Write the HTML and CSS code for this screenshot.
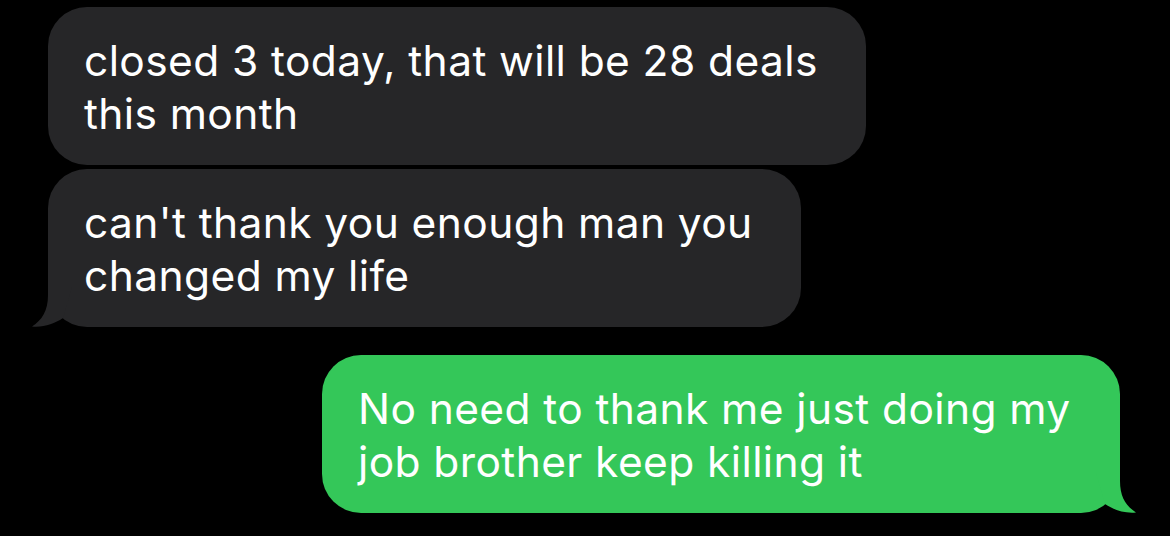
FILE: index.html
```html
<!DOCTYPE html>
<html>
<head>
<meta charset="utf-8">
<link rel="stylesheet" href="styles.css">
</head>
<body>
<div class="thread">
  <div class="msg in w1">closed 3 today, that will be 28 deals<br>this month</div>
  <div class="msg in w2">can't thank you enough man you<br>changed my life<svg class="tail tail-in" width="50" height="40" viewBox="0 0 50 40"><path d="M18,0 L18,8 C18,24 12,33 2,39.5 C14,40.5 24,37 33,31 L42,0 Z"/></svg></div>
  <div class="msg out w3">No need to thank me just doing my<br>job brother keep killing it<svg class="tail tail-out" width="50" height="40" viewBox="0 0 50 40"><path d="M18,0 L18,8 C18,24 12,33 2,39.5 C14,40.5 24,37 33,31 L42,0 Z"/></svg></div>
</div>
</body>
</html>
```
FILE: styles.css
```css
html, body {
  margin: 0;
  padding: 0;
  background: #000;
}
body {
  width: 1170px;
  height: 536px;
  overflow: hidden;
}
.thread {
  display: flex;
  flex-direction: column;
  align-items: flex-start;
  padding: 7px 50px 0 48px;
}
.msg {
  position: relative;
  box-sizing: border-box;
  height: 158px;
  padding: 27px 0 25px 36px;
  border-radius: 39px;
  font-family: Inter, "Liberation Sans", sans-serif;
  font-size: 42.5px;
  letter-spacing: 0.4px;
  line-height: 53px;
  color: #fff;
  white-space: nowrap;
}
.in {
  background: #262628;
}
.in .tail path { fill: #262628; }
.out {
  background: #34c759;
  align-self: flex-end;
}
.out .tail path { fill: #34c759; }
.w1 { width: 818px; }
.w2 { width: 753px; margin-top: 4px; }
.w3 { width: 798px; margin-top: 28px; }
.tail {
  position: absolute;
  bottom: 0;
  display: block;
}
.tail-in {
  left: -18px;
}
.tail-out {
  right: -18px;
  transform: scaleX(-1);
}
```
